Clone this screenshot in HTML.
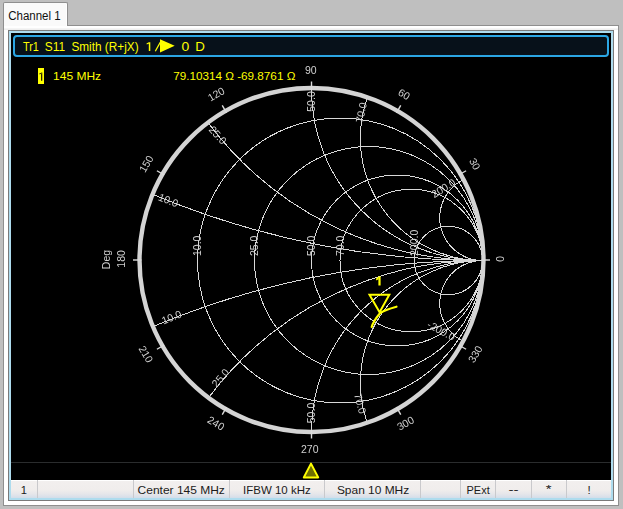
<!DOCTYPE html>
<html><head><meta charset="utf-8"><style>
*{margin:0;padding:0;box-sizing:border-box}
html,body{width:623px;height:509px;overflow:hidden;background:#bfbfbf;font-family:"Liberation Sans",sans-serif}
#panel{position:absolute;left:3px;top:25px;width:616px;height:481px;background:#fff;border:1px solid #8f8f8f}
#tab{position:absolute;left:3px;top:2px;width:65px;height:24px;background:#fafafa;border:1px solid #8f8f8f;border-bottom:none;border-radius:2px 2px 0 0;box-shadow:inset -1px 0 0 #fff}
#prow{position:absolute;left:4px;top:28px;width:614px;height:2px;background:linear-gradient(#f8f8f8,#ececec)}
#frame{position:absolute;left:8px;top:30px;width:606px;height:471px;border:1px solid #7a7a7a;background:#aedcee}
#black{position:absolute;left:11px;top:33px;width:600px;height:447px;background:#000}
#hdr{position:absolute;left:13px;top:35px;width:596px;height:22px;border:2px solid #2ba6e4;border-radius:4px;background:#07111a}
#status{position:absolute;left:11px;top:480px;width:600px;height:18px;background:linear-gradient(#ffffff 0px,#ffffff 1px,#f2efee 1px,#f0edec 10px,#e6e6ea 14px,#d3dde9 18px)}
.sep{position:absolute;top:480px;width:1px;height:18px;background:#c9c9cc}
#mk{position:absolute;left:38px;top:68px;width:6px;height:16px;background:#ffff00}
</style></head><body>
<div id="panel"></div>
<div id="tab"></div>
<div id="prow"></div>
<div id="frame"></div>
<div id="black"></div>
<div id="hdr"></div>
<div id="mk"></div>
<div id="status"></div>
<div class="sep" style="left:37px"></div>
<div class="sep" style="left:133px"></div>
<div class="sep" style="left:229px"></div>
<div class="sep" style="left:324px"></div>
<div class="sep" style="left:420px"></div>
<div class="sep" style="left:460px"></div>
<div class="sep" style="left:495px"></div>
<div class="sep" style="left:531px"></div>
<div class="sep" style="left:566px"></div>
<svg width="623" height="509" style="position:absolute;left:0;top:0" font-family="Liberation Sans">
<path d="M160 39.2 L174.7 45.8 L160 52.4 Z M148.8 42.2 L150.3 42.2 L150.3 50.9 L148.8 50.9 Z M148.8 42.2 L146.5 43.5 L146.8 44.6 L148.9 43.6 Z" fill="#ffff00"/><line x1="155.3" y1="51.2" x2="160.3" y2="42.3" stroke="#ffff00" stroke-width="1.3"/>
<path d="M41 72.4 L42.3 72.4 L42.3 80.8 L41 80.8 Z M41.2 72.4 L39.3 73.6 L39.6 74.4 L41.4 73.6 Z" fill="#2a2200"/>
<text x="8.19" y="20.00" font-size="12" fill="#111111" font-weight="normal" textLength="52.43" lengthAdjust="spacingAndGlyphs">Channel 1</text><text x="22.95" y="51.00" font-size="12" fill="#ffff00" font-weight="normal" textLength="15.90" lengthAdjust="spacingAndGlyphs">Tr1</text><text x="44.83" y="51.00" font-size="12" fill="#ffff00" font-weight="normal" textLength="20.34" lengthAdjust="spacingAndGlyphs">S11</text><text x="71.45" y="51.00" font-size="12" fill="#ffff00" font-weight="normal" textLength="67.14" lengthAdjust="spacingAndGlyphs">Smith (R+jX)</text><text x="181.64" y="51.00" font-size="12" fill="#ffff00" font-weight="normal" textLength="7.79" lengthAdjust="spacingAndGlyphs">0</text><text x="195.21" y="51.00" font-size="12" fill="#ffff00" font-weight="normal" textLength="9.61" lengthAdjust="spacingAndGlyphs">D</text><text x="53.09" y="80.00" font-size="11" fill="#ffff00" font-weight="normal" textLength="48.06" lengthAdjust="spacingAndGlyphs">145 MHz</text><text x="173.18" y="80.00" font-size="11" fill="#ffff00" font-weight="normal" textLength="122.21" lengthAdjust="spacingAndGlyphs">79.10314 Ω -69.8761 Ω</text><text x="20.74" y="493.80" font-size="11.5" fill="#1b1b1b" font-weight="normal" textLength="6.20" lengthAdjust="spacingAndGlyphs">1</text><text x="137.62" y="493.80" font-size="11.5" fill="#1b1b1b" font-weight="normal" textLength="87.24" lengthAdjust="spacingAndGlyphs">Center 145 MHz</text><text x="243.04" y="493.80" font-size="11.5" fill="#1b1b1b" font-weight="normal" textLength="67.65" lengthAdjust="spacingAndGlyphs">IFBW 10 kHz</text><text x="336.90" y="493.80" font-size="11.5" fill="#1b1b1b" font-weight="normal" textLength="72.32" lengthAdjust="spacingAndGlyphs">Span 10 MHz</text><text x="466.53" y="493.80" font-size="11.5" fill="#1b1b1b" font-weight="normal" textLength="23.19" lengthAdjust="spacingAndGlyphs">PExt</text><text x="508.58" y="492.60" font-size="11.5" fill="#1b1b1b" font-weight="normal" textLength="10.10" lengthAdjust="spacingAndGlyphs">--</text><text x="545.87" y="492.60" font-size="11.5" fill="#1b1b1b" font-weight="normal" textLength="5.78" lengthAdjust="spacingAndGlyphs">*</text><text x="587.60" y="493.80" font-size="11.5" fill="#1b1b1b" font-weight="normal">!</text>
</svg>
<svg width="623" height="509" viewBox="0 0 623 509" style="position:absolute;left:0;top:0;will-change:transform">
<g fill="none" stroke="#d8d8d8" stroke-width="1" shape-rendering="crispEdges"><circle cx="340.00" cy="260.50" r="142.50" />
<circle cx="368.50" cy="260.50" r="114.00" />
<circle cx="397.00" cy="260.50" r="85.50" />
<circle cx="411.25" cy="260.50" r="71.25" />
<circle cx="448.30" cy="260.50" r="34.20" />
<path d="M482.50 260.50 A855.00 855.00 0 0 1 153.65 194.73" />
<path d="M482.50 260.50 A855.00 855.00 0 0 0 153.65 326.27" />
<path d="M482.50 260.50 A342.00 342.00 0 0 1 208.90 123.70" />
<path d="M482.50 260.50 A342.00 342.00 0 0 0 208.90 397.30" />
<path d="M482.50 260.50 A171.00 171.00 0 0 1 311.50 89.50" />
<path d="M482.50 260.50 A171.00 171.00 0 0 0 311.50 431.50" />
<path d="M482.50 260.50 A122.14 122.14 0 0 1 366.96 98.74" />
<path d="M482.50 260.50 A122.14 122.14 0 0 0 366.96 422.26" />
<path d="M482.50 260.50 A42.75 42.75 0 0 1 462.38 180.03" />
<path d="M482.50 260.50 A42.75 42.75 0 0 0 462.38 340.97" /></g>
<circle cx="311.5" cy="260.0" r="172.0" fill="none" stroke="#d4d4d4" stroke-width="4.4"/>
<g stroke="#dcdcdc" stroke-width="1.4"><line x1="481.50" y1="260.00" x2="490.00" y2="260.00" /><line x1="458.72" y1="175.00" x2="466.09" y2="170.75" /><line x1="396.50" y1="112.78" x2="400.75" y2="105.41" /><line x1="311.50" y1="90.00" x2="311.50" y2="81.50" /><line x1="226.50" y1="112.78" x2="222.25" y2="105.41" /><line x1="164.28" y1="175.00" x2="156.91" y2="170.75" /><line x1="141.50" y1="260.00" x2="133.00" y2="260.00" /><line x1="164.28" y1="345.00" x2="156.91" y2="349.25" /><line x1="226.50" y1="407.22" x2="222.25" y2="414.59" /><line x1="311.50" y1="430.00" x2="311.50" y2="438.50" /><line x1="396.50" y1="407.22" x2="400.75" y2="414.59" /><line x1="458.72" y1="345.00" x2="466.09" y2="349.25" /></g>
<g fill="#d0d0d0" font-family="Liberation Sans" font-size="10.5" text-anchor="middle"><text transform="translate(499.85 258.80) rotate(90)" y="3.9">0</text><text transform="translate(474.99 163.85) rotate(60)" y="3.9">30</text><text transform="translate(404.20 94.16) rotate(30)" y="3.9">60</text><text transform="translate(310.75 70.10) rotate(0)" y="3.9">90</text><text transform="translate(216.10 93.96) rotate(-30)" y="3.9">120</text><text transform="translate(146.11 163.75) rotate(-60)" y="3.9">150</text><text transform="translate(121.15 258.90) rotate(-90)" y="3.9">180</text><text transform="translate(146.11 354.05) rotate(60)" y="3.9">210</text><text transform="translate(216.10 423.04) rotate(30)" y="3.9">240</text><text transform="translate(309.80 448.70) rotate(0)" y="3.9">270</text><text transform="translate(405.40 423.04) rotate(-30)" y="3.9">300</text><text transform="translate(475.09 354.05) rotate(-60)" y="3.9">330</text>
<text transform="translate(106 259.5) rotate(-90)" y="3.9">Deg</text>
<text transform="translate(197.50 256) rotate(-90)" y="3.9" text-anchor="start">10.0</text><text transform="translate(254.50 256) rotate(-90)" y="3.9" text-anchor="start">25.0</text><text transform="translate(311.50 256) rotate(-90)" y="3.9" text-anchor="start">50.0</text><text transform="translate(340.00 256) rotate(-90)" y="3.9" text-anchor="start">70.0</text><text transform="translate(414.10 256) rotate(-90)" y="3.9" text-anchor="start">200.0</text><text transform="translate(168.4 200.1) rotate(21.6)" y="3.9">10.0</text><text transform="translate(217.9 135.0) rotate(48.5)" y="3.9">25.0</text><text transform="translate(311.0 101.5) rotate(-90)" y="3.9">50.0</text><text transform="translate(361.0 112.5) rotate(-78.4)" y="3.9">70.0</text><text transform="translate(443.3 188.0) rotate(-32)" y="3.9">200.0</text><text transform="translate(171.5 317.0) rotate(-22.1)" y="3.9">10.0</text><text transform="translate(220.3 377.7) rotate(-49.3)" y="3.9">25.0</text><text transform="translate(310.7 413.0) rotate(-90)" y="3.9">50.0</text><text transform="translate(360.4 403.4) rotate(75)" y="3.9">70.0</text><text transform="translate(441.3 330.5) rotate(28.5)" y="3.9">-200.0</text></g>
<path d="M371.7 327 C373 322 376 318 380 313.2 C383 311 386 309.5 396.5 306.7" fill="none" stroke="#ffff00" stroke-width="2.2" stroke-linecap="round"/>
<path d="M369.5 294.8 L389.3 294.8 L379.6 312.2 Z" fill="none" stroke="#ffff00" stroke-width="2"/>
<path d="M378.4 276.6 L380.6 276.6 L380.6 285.6 L378.4 285.6 Z M378.4 276.6 L375.8 279.0 L376.6 280.4 L378.6 279.0 Z" fill="#ffff00"/>
<line x1="11" y1="462.5" x2="611" y2="462.5" stroke="#2a2c2d" stroke-width="1"/>
<path d="M311 463.6 L318.2 477.4 L303.8 477.4 Z" fill="#6e6e00" stroke="#ffff00" stroke-width="2" stroke-linejoin="round"/>
</svg>
</body></html>
